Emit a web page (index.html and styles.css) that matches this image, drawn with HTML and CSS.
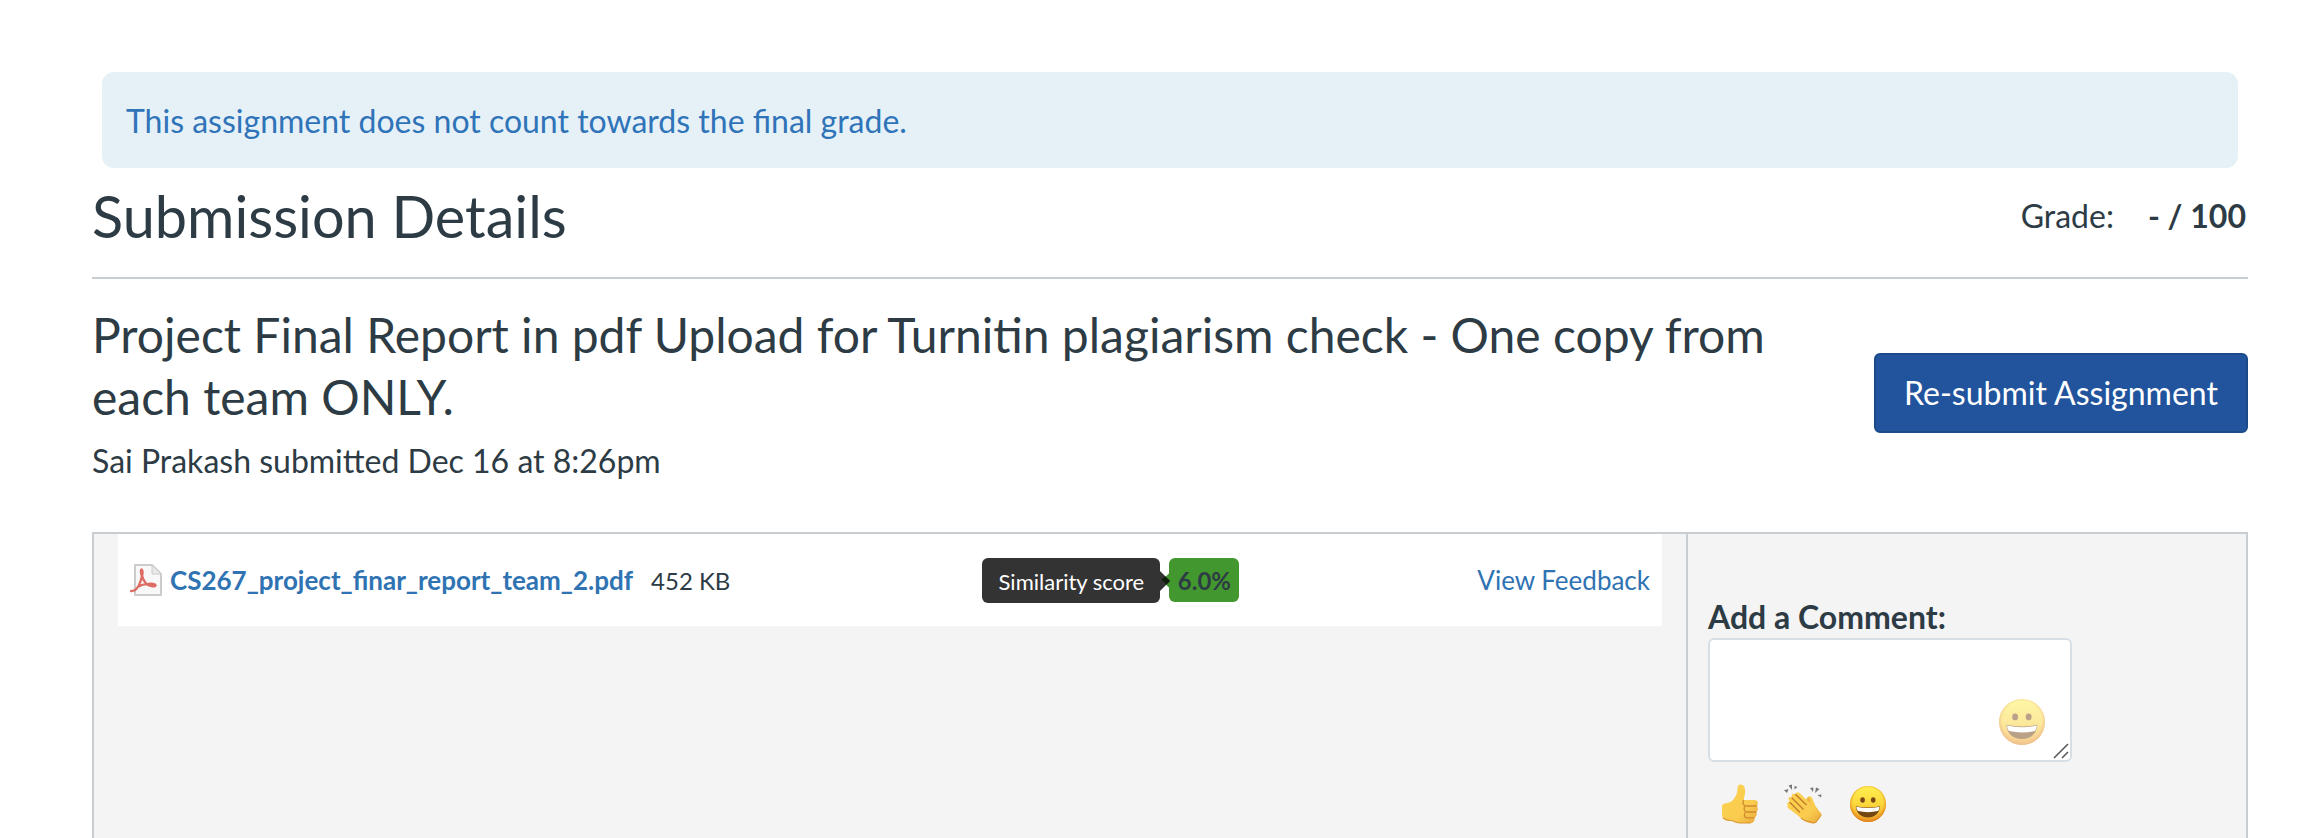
FILE: index.html
```html
<!DOCTYPE html>
<html lang="en">
<head>
<meta charset="utf-8">
<title>Submission Details</title>
<link rel="stylesheet" href="styles.css">
</head>
<body>
<svg class="defs" width="0" height="0" aria-hidden="true">
  <defs>
    <linearGradient id="face" x1="0" y1="0" x2="0" y2="1">
      <stop offset="0" stop-color="#fff04e"/><stop offset=".5" stop-color="#fbd73c"/><stop offset="1" stop-color="#f09a25"/>
    </linearGradient>
    <radialGradient id="rim" cx=".5" cy=".47" r=".53">
      <stop offset=".8" stop-color="#e8941f" stop-opacity="0"/><stop offset="1" stop-color="#dc7f1d"/>
    </radialGradient>
    <linearGradient id="skin" x1="0" y1="0" x2="1" y2="1">
      <stop offset="0" stop-color="#fbd34f"/><stop offset=".65" stop-color="#f9cb4f"/><stop offset="1" stop-color="#e9a73a"/>
    </linearGradient>
    <symbol id="grin" viewBox="0 0 36 36">
      <circle cx="18" cy="18" r="18" fill="url(#face)"/>
      <circle cx="18" cy="18" r="18" fill="url(#rim)"/>
      <ellipse cx="12.6" cy="14" rx="2.3" ry="2.7" fill="#7a4618"/>
      <ellipse cx="23.2" cy="14" rx="2.3" ry="2.7" fill="#7a4618"/>
      <path d="M5.8 20.2Q18 22.8 30 20.2C29.6 27.5 24.5 31.4 18 31.4S6.200 27.500 5.800 20.200Z" fill="#744611"/>
      <path d="M6.300 20.800Q18 23.400 29.500 20.800Q29.300 24.200 28 25.100Q18 27.400 7.800 25.100Q6.500 24 6.300 20.800Z" fill="#fff"/>
    </symbol>
  </defs>
</svg>
<main class="page">
  <div class="alert">This assignment does not count towards the final grade.</div>
  <header class="header">
    <h1 class="header-title">Submission Details</h1>
    <div class="grade"><span>Grade:</span><b>- / 100</b></div>
  </header>
  <section class="summary">
    <div class="summary-text">
      <h2 class="assignment">Project Final Report in pdf Upload for Turnitin plagiarism check - One copy from each team ONLY.</h2>
      <div class="submitted">Sai Prakash submitted Dec 16 at 8:26pm</div>
    </div>
    <button class="resubmit" type="button">Re-submit Assignment</button>
  </section>
  <section class="panel">
    <div class="files">
      <div class="file">
        <svg class="pdf" viewBox="0 0 32 32">
          <path d="M5 1H22L31 10V31H5Z" fill="#f8f8f8" stroke="#ccc" stroke-width="2" stroke-linejoin="round"/>
          <path d="M22 1V10H31Z" fill="#e9e9e9" stroke="#ccc" stroke-width="1"/>
          <path d="M1 27C6 28 9.500 21 11.300 15C12.800 10 12.500 6 11.600 5.500C10 6 11.500 14 16 19.500C19 22.500 25 23 25.500 21.500C25 18.500 13 19.800 8.500 22.500" fill="none" stroke="#d9534a" stroke-width="2.400" stroke-linecap="round" opacity=".85"/>
        </svg>
        <a class="file-name">CS267_project_finar_report_team_2.pdf</a>
        <span class="file-size">452 KB</span>
        <span class="score">6.0%<span class="tip">Similarity score</span>
          <svg class="arrow" viewBox="0 0 10 22"><path d="M10 2.500L1.500 10.500L10 18.500Z" fill="#43972f"/><path d="M0 1L10 11L0 21Z" fill="#333"/><path d="M5.200 6.200L10 11L6.500 14.500L1.500 9.800Z" fill="#0f1f0b"/></svg>
        </span>
        <a class="feedback">View Feedback</a>
      </div>
    </div>
    <aside class="comments">
      <label class="comment-label">Add a Comment:</label>
      <div class="comment-box">
        <svg class="picker"><use href="#grin"/></svg>
        <svg class="grip" viewBox="0 0 16 16"><path d="M1 15L15 1M9 15L15 9" stroke="#555" stroke-width="1.500" fill="none"/></svg>
      </div>
      <div class="reactions">
        <svg class="thumb" viewBox="0 0 36 40">
          <path d="M.5 20.500C3 18.500 7 19.500 10 17C13 14 15.500 10 15.500 5C15.500 2 16.500 .5 18.500 .5C22.500 .5 23.500 5 23 9C22.700 12 21.500 14.500 22 16H33C36.500 16.500 36.700 20.500 34.500 22C36.500 23.500 36.300 27 34 28C35.500 30 34.700 33 32.500 33.700C33 36.500 31.500 39 29 39H18C14 39 12 36.500 8.500 36.500C5 36.500 2 36 .5 33.500Q-.8 26.500 .5 20.500Z" fill="url(#skin)"/>
          <path d="M21.500 16.500Q20 20 23 22H34.500M34 28H24Q21.500 26.500 22.500 23M32 33.800H24Q21.500 32 23 29" fill="none" stroke="#cf8b2d" stroke-width="1.300" stroke-linecap="round"/>
          <path d="M1 34Q4 36.500 8.500 36.500C12 36.500 14 39 18 39H29" fill="none" stroke="#d9962f" stroke-width="1.200"/>
        </svg>
        <svg class="clap" viewBox="0 0 38 40">
          <path d="M22 17Q23 12 26 13Q29 17 31 21.500L37 30L30 38Q24 41 21 36Z" fill="#eeb43f"/>
          <path d="M3.500 21C2.500 18.500 4.500 17.500 6 18.500L4.500 15C4.500 12.500 6.500 12.500 8 14L7.500 11.500C8 9.500 10 9.500 11.500 10.500C12 8 14.500 7.500 16 9.500L26.500 19.500Q26.500 15 24.500 12.500Q27.500 11 29 16Q31 22 33 25.500L37.500 29.500Q38 32 32 38Q29 40.500 26 37.500C20 37 17 35 14 31.500L4.500 24.500C2.500 22.500 3 21 5 22Z" fill="url(#skin)"/>
          <path d="M6 18.500L15.500 28M8 14L19 25M11.500 10.500L22 20.500" fill="none" stroke="#c57a2b" stroke-width="1.400" stroke-linecap="round"/>
          <path d="M17 34Q21 37.500 26 37.500Q29 40 32 38L37 31" fill="none" stroke="#d9962f" stroke-width="1.200"/>
          <path d="M4.500 1.500L8 .5L8 6ZM0 6.200L4.500 5L3 9ZM10.500 2L13.500 3L10.500 5.500ZM26 4L29.500 3.500L29 8ZM32 3.500L35.500 5L31 9ZM33.500 11L37.500 10.500L37 13.500Z" fill="#777"/>
        </svg>
        <svg class="grin" viewBox="0 0 36 36"><use href="#grin"/></svg>
      </div>
    </aside>
  </section>
</main>
</body>
</html>
```
FILE: styles.css
```css
* { box-sizing: border-box; }
body { margin: 0; background: #fff; color: #2d3b45; font-family: Lato, "Open Sans", sans-serif; font-size: 32px; }
.defs { position: absolute; }
.page { display: flex; flex-direction: column; height: 838px; padding: 72px 58px 0 92px; overflow: hidden; }
.alert { flex: none; height: 96px; margin: 0 10px; padding: 0 24px; border-radius: 12px; background: #e5f1f6; color: #2f73b9; line-height: 97px; }
.header { flex: none; display: flex; justify-content: space-between; height: 111px; border-bottom: 2px solid #c7cdd1; }
.header-title { margin: 0; font-size: 57.6px; font-weight: 400; line-height: 96px; }
.grade { display: flex; gap: 34px; line-height: 96px; padding-right: 2px; }
.summary { flex: none; display: flex; justify-content: space-between; height: 253px; }
.summary-text { width: 1720px; padding-top: 25px; }
.assignment { margin: 0; font-size: 48px; font-weight: 400; line-height: 62px; }
.submitted { line-height: 66px; }
.resubmit { width: 374px; height: 80px; margin-top: 74px; padding: 0; border: 2px solid #1c4a89; border-radius: 6px; background: #21549d; color: #fff; font: 32px/76px Lato, sans-serif; }
.panel { flex: 1; display: flex; border: 2px solid #c7cdd1; border-bottom: 0; background: #f4f4f4; }
.files { width: 1592px; padding: 0 24px; }
.file { display: flex; align-items: center; width: 1544px; height: 92px; padding: 0 12px; background: #fff; font-size: 26px; }
.pdf { width: 32px; height: 32px; margin-right: 8px; }
.file-name { color: #2f73b3; font-weight: 700; }
.file-size { margin-left: 18px; font-size: 24px; }
.score { position: relative; width: 70px; height: 44px; margin: 0 auto 0 439px; border-radius: 6px; background: #43972f; font-size: 24px; font-weight: 700; line-height: 45px; text-align: center; }
.tip { position: absolute; right: 79px; top: 0; width: 178px; height: 45px; border-radius: 6px; background: #333; color: #fff; font-size: 22px; font-weight: 400; line-height: 47px; }
.arrow { position: absolute; left: -9px; top: 12px; width: 10px; height: 22px; }
.feedback { color: #2f73b3; }
.comments { flex: 1; padding: 62px 19px 0 20px; border-left: 2px solid #c7cdd1; }
.comment-label { display: block; height: 42px; font-weight: 700; line-height: 42px; }
.comment-box { position: relative; width: 364px; height: 124px; border: 2px solid #d7dfe6; border-radius: 6px; background: #fff; }
.picker { position: absolute; right: 25px; bottom: 15px; width: 46px; height: 46px; opacity: .5; }
.grip { position: absolute; right: 1px; bottom: 1px; width: 16px; height: 16px; }
.reactions { display: flex; align-items: center; height: 40px; margin: 22px 0 0 14px; }
.thumb { width: 36px; height: 40px; }
.clap { width: 38px; height: 40px; margin-left: 26px; }
.grin { width: 36px; height: 36px; margin-left: 28px; }
```
